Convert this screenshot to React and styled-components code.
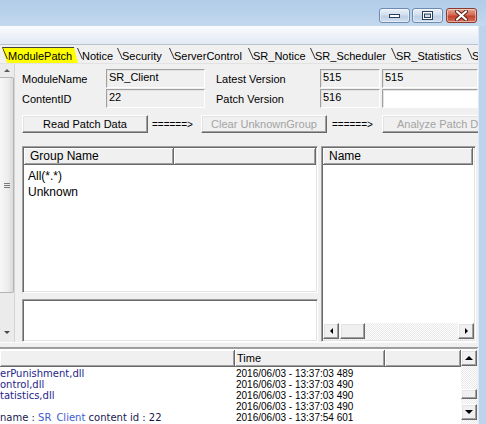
import React from 'react';
import styled, { createGlobalStyle } from 'styled-components';

const GlobalStyle = createGlobalStyle`
  html, body { margin: 0; padding: 0; background: #f0f0f0; }
  body { font-family: "Liberation Sans", Arial, sans-serif; }
`;

const Window = styled.div`
  width: 486px;
  height: 424px;
  overflow: hidden;
  display: flex;
  flex-direction: column;
  background: #f0f0f0;
`;

const TitleBar = styled.div`
  height: 26px;
  flex: none;
  box-sizing: border-box;
  padding: 8px 9px 0 0;
  display: flex;
  justify-content: flex-end;
  align-items: flex-start;
  gap: 2px;
  background: linear-gradient(180deg, #b2cce8 0%, #bad2eb 55%, #c4d9ee 100%);
`;

const CaptionButton = styled.div`
  width: ${p => p.w}px;
  height: 15px;
  margin-left: ${p => p.ml || 0}px;
  box-sizing: border-box;
  border: 1px solid ${p => (p.close ? '#8a3b30' : '#6d8bb0')};
  border-radius: 3px;
  display: flex;
  align-items: center;
  justify-content: center;
  background: ${p =>
    p.close
      ? 'linear-gradient(180deg, #e7a797 0%, #d46a55 45%, #c2432e 55%, #d66e58 100%)'
      : 'linear-gradient(180deg, #e9f0f8 0%, #d3dfee 45%, #bfd0e5 55%, #d1def0 100%)'};
  box-shadow: inset 0 0 0 1px rgba(255, 255, 255, 0.45);
`;

const Body = styled.div`
  flex: 1;
  display: flex;
  min-height: 0;
`;

const Main = styled.div`
  width: 478px;
  flex: none;
  display: flex;
  flex-direction: column;
  overflow: hidden;
`;

const Frame = styled.div`
  flex: 1;
  background: linear-gradient(90deg, #dfe9f5 0 1px, #bcd3eb 1px);
`;

const Strip = styled.div`
  height: 18px;
  flex: none;
  background: linear-gradient(180deg, #fbfcfe 0%, #eef2f8 50%, #e2e9f3 100%);
  border-bottom: 1px solid #b9c3cf;
`;

const TabRow = styled.div`
  height: 19px;
  flex: none;
  box-sizing: border-box;
  padding-top: 2px;
  display: flex;
  border-bottom: 1px solid #e2e2e2;
  overflow: hidden;
`;

const Tab = styled.div`
  position: relative;
  flex: none;
  width: ${p => p.w}px;
  height: 16px;
  box-sizing: border-box;
  padding-left: ${p => p.pl || 4}px;
  font-size: 11px;
  line-height: 17px;
  color: #000;
  white-space: nowrap;
  background: ${p => (p.active ? '#ffff00' : 'transparent')};
  border-top: ${p => (p.active ? '1px solid #404040' : '1px solid transparent')};
  clip-path: ${p =>
    p.active ? 'polygon(2px 0, calc(100% - 4px) 0, 100% 100%, 7px 100%)' : 'none'};
  &::before {
    content: '';
    position: absolute;
    left: ${p => (p.active ? 2 : -1)}px;
    top: 0;
    width: 1px;
    height: 11px;
    background: #303030;
    transform: skewX(24deg);
    transform-origin: top left;
  }
`;

const Page = styled.div`
  height: 278px;
  flex: none;
  display: flex;
`;

const VScroll = styled.div`
  width: 14px;
  flex: none;
  display: flex;
  flex-direction: column;
  align-items: stretch;
  background: #ebebeb;
  border-right: 1px solid #d4d4d4;
`;

const ArrowCell = styled.div`
  height: ${p => p.h}px;
  flex: none;
  display: flex;
  align-items: center;
  justify-content: center;
`;

const Thumb = styled.div`
  height: 216px;
  flex: none;
  box-sizing: border-box;
  border: 1px solid #b4b4b4;
  border-left: none;
  border-radius: 0 2px 2px 0;
  background: linear-gradient(90deg, #f7f7f7 0%, #ededed 60%, #dadada 100%);
  display: flex;
  align-items: center;
  justify-content: center;
`;

const Track = styled.div`
  flex: 1;
`;

const Content = styled.div`
  flex: 1;
  min-width: 0;
  box-sizing: border-box;
  padding: 5px 0 0 7px;
  display: flex;
  flex-direction: column;
  overflow: hidden;
`;

const FormGrid = styled.div`
  display: grid;
  grid-template-columns: 84px 99px 115px 60px 98px;
  grid-auto-rows: 19px;
  row-gap: 1px;
  flex: none;
`;

const Label = styled.div`
  font-size: 11px;
  color: #000;
  align-self: center;
  padding-left: ${p => p.pl || 0}px;
  white-space: nowrap;
`;

const Field = styled.div`
  box-sizing: border-box;
  margin-left: ${p => p.ml || 0}px;
  padding: 1px 0 0 2px;
  font-size: 11px;
  line-height: 13px;
  color: #000;
  background: ${p => (p.white ? '#fff' : '#f0f0f0')};
  border: 1px solid;
  border-color: #a0a0a0 #fff #fff #a0a0a0;
  box-shadow: inset 1px 1px 0 #e3e3e3;
  white-space: nowrap;
  overflow: hidden;
`;

const ButtonRow = styled.div`
  margin-top: 7px;
  height: 18px;
  flex: none;
  display: flex;
  align-items: stretch;
`;

const Button = styled.div`
  width: 126px;
  flex: none;
  box-sizing: border-box;
  padding-left: ${p => p.pl || 0}px;
  display: flex;
  align-items: center;
  justify-content: ${p => (p.pl ? 'flex-start' : 'center')};
  font-size: 11px;
  color: ${p => (p.disabled ? '#a3a3a3' : '#000')};
  background: #f0f0f0;
  border: 1px solid;
  border-color: #fff #696969 #696969 #fff;
  box-shadow: inset -1px -1px 0 #a0a0a0, inset 1px 1px 0 #e3e3e3;
  white-space: nowrap;
  overflow: hidden;
`;

const Arrow = styled.div`
  width: ${p => p.w}px;
  flex: none;
  box-sizing: border-box;
  padding-left: ${p => p.pl}px;
  font-size: 10px;
  display: flex;
  align-items: center;
  color: #000;
`;

const Lists = styled.div`
  margin-top: 13px;
  flex: 1;
  min-height: 0;
  display: flex;
  gap: 3px;
`;

const LeftCol = styled.div`
  width: 296px;
  flex: none;
  display: flex;
  flex-direction: column;
  gap: 6px;
`;

const Sunken = styled.div`
  box-sizing: border-box;
  background: #fff;
  border: 1px solid;
  border-color: #a0a0a0 #fff #fff #a0a0a0;
  box-shadow: inset 1px 1px 0 #696969, inset -1px -1px 0 #e3e3e3;
  padding: 1px;
  display: flex;
  flex-direction: column;
  overflow: hidden;
`;

const ListBox = styled(Sunken)`
  flex: 1;
  min-height: 0;
`;

const Memo = styled(Sunken)`
  height: 43px;
  flex: none;
`;

const RightList = styled(Sunken)`
  width: 155px;
  flex: none;
`;

const Header = styled.div`
  height: 17px;
  flex: none;
  display: flex;
`;

const HeaderCell = styled.div`
  width: ${p => (p.w ? `${p.w}px` : 'auto')};
  flex: ${p => (p.w ? 'none' : '1')};
  box-sizing: border-box;
  padding-left: ${p => p.pl || 6}px;
  font-size: ${p => p.fs || 12}px;
  line-height: 16px;
  color: #000;
  background: #f0f0f0;
  border-right: 1px solid #696969;
  border-bottom: 1px solid #696969;
  box-shadow: inset 1px 1px 0 #fff, inset -1px -1px 0 #a0a0a0;
  white-space: nowrap;
  overflow: hidden;
`;

const Items = styled.div`
  flex: 1;
  padding: 3px 0 0 4px;
`;

const Item = styled.div`
  font-size: 12px;
  line-height: 16px;
  color: #000;
`;

const HScroll = styled.div`
  height: 17px;
  flex: none;
  display: flex;
  background: repeating-conic-gradient(#e8e8e8 0 25%, #ffffff 0 50%) 0 0 / 2px 2px;
`;

const ScrollBox = styled.div`
  width: ${p => p.w || 16}px;
  height: ${p => p.h || 16}px;
  margin-left: ${p => p.ml || 0}px;
  margin-top: ${p => p.mt || 0}px;
  flex: none;
  box-sizing: border-box;
  display: flex;
  align-items: center;
  justify-content: center;
  background: #f0f0f0;
  border: 1px solid;
  border-color: #fff #696969 #696969 #fff;
  box-shadow: inset -1px -1px 0 #a0a0a0, inset 1px 1px 0 #e3e3e3;
`;

const Spacer = styled.div`
  flex: 1;
`;

const Splitter = styled.div`
  height: 6px;
  flex: none;
  box-sizing: border-box;
  border-top: 1px solid #fbfbfb;
  border-bottom: 1px solid #9c9c9c;
  background: #f0f0f0;
`;

const BottomList = styled.div`
  flex: 1;
  min-height: 0;
  display: flex;
  background: #fff;
  border-top: 1px solid #a0a0a0;
  padding-top: 1px;
  margin-right: 1px;
`;

const LogArea = styled.div`
  flex: 1;
  min-width: 0;
  display: flex;
  flex-direction: column;
  overflow: hidden;
`;

const LogRows = styled.div`
  padding-top: 1px;
`;

const LogRow = styled.div`
  display: flex;
  height: 11px;
  line-height: 11px;
  white-space: nowrap;
`;

const LogName = styled.div`
  width: 235px;
  flex: none;
  overflow: hidden;
  font-family: "DejaVu Sans", sans-serif;
  font-size: 10px;
  color: #25258a;
`;

const LogTime = styled.div`
  padding-left: 1px;
  font-size: 10px;
  color: #000;
`;

const Blue = styled.span`
  color: #3b5bd0;
`;

const Dark = styled.span`
  color: #18184f;
`;

const BottomScroll = styled.div`
  width: 16px;
  flex: none;
  display: flex;
  flex-direction: column;
  background: repeating-conic-gradient(#e8e8e8 0 25%, #ffffff 0 50%) 0 0 / 2px 2px;
`;

const Tri = ({ dir, size = 3, color = '#000' }) => {
  const s = size;
  const pts = {
    up: `0,${s} ${s},0 ${2 * s},${s}`,
    down: `0,0 ${2 * s},0 ${s},${s}`,
    left: `${s},0 ${s},${2 * s} 0,${s}`,
    right: `0,0 0,${2 * s} ${s},${s}`,
  }[dir];
  const horiz = dir === 'left' || dir === 'right';
  return (
    <svg width={horiz ? s : 2 * s} height={horiz ? 2 * s : s} viewBox={`0 0 ${horiz ? s : 2 * s} ${horiz ? 2 * s : s}`}>
      <polygon points={pts} fill={color} />
    </svg>
  );
};

const tabs = [
  { label: 'ModulePatch', w: 78, pl: 8, active: true },
  { label: 'Notice', w: 40 },
  { label: 'Security', w: 52 },
  { label: 'ServerControl', w: 79 },
  { label: 'SR_Notice', w: 62 },
  { label: 'SR_Scheduler', w: 81 },
  { label: 'SR_Statistics', w: 76 },
  { label: 'S', w: 20 },
];

const logs = [
  { name: 'erPunishment,dll', time: '2016/06/03 - 13:37:03 489' },
  { name: 'ontrol,dll', time: '2016/06/03 - 13:37:03 490' },
  { name: 'tatistics,dll', time: '2016/06/03 - 13:37:03 490' },
  { name: '', time: '2016/06/03 - 13:37:03 490' },
  {
    name: (
      <>
        <Dark>name : </Dark>
        <Blue>SR_Client</Blue>
        <Dark> content id : 22</Dark>
      </>
    ),
    time: '2016/06/03 - 13:37:54 601',
  },
];

const App = () => {
  return (
    <Window>
      <GlobalStyle />
      <TitleBar>
        <CaptionButton w={31}>
          <svg width="11" height="5" viewBox="0 0 11 5">
            <rect x="0.5" y="1.5" width="10" height="3" fill="#fff" stroke="#2c3e58" />
          </svg>
        </CaptionButton>
        <CaptionButton w={31}>
          <svg width="11" height="9" viewBox="0 0 11 9">
            <rect x="0.5" y="0.5" width="10" height="8" fill="#fff" stroke="#2c3e58" />
            <rect x="2.5" y="3" width="6" height="3.5" fill="#cddbee" stroke="#2c3e58" />
          </svg>
        </CaptionButton>
        <CaptionButton w={31} ml={1} close>
          <svg width="13" height="11" viewBox="0 0 13 11">
            <path d="M2 1.5 L11 9.5 M11 1.5 L2 9.5" stroke="#5a1c14" strokeWidth="4" strokeLinecap="round" />
            <path d="M2 1.5 L11 9.5 M11 1.5 L2 9.5" stroke="#fff" strokeWidth="2.2" strokeLinecap="round" />
          </svg>
        </CaptionButton>
      </TitleBar>
      <Body>
        <Main>
          <Strip />
          <TabRow>
            {tabs.map(t => (
              <Tab key={t.label} w={t.w} pl={t.pl} active={t.active ? 1 : 0}>
                {t.label}
              </Tab>
            ))}
          </TabRow>
          <Page>
            <VScroll>
              <ArrowCell h={13}>
                <Tri dir="up" size={3} color="#5a5a5a" />
              </ArrowCell>
              <Thumb>
                <svg width="6" height="5" viewBox="0 0 6 5">
                  <path d="M0 0.5 H6 M0 2.5 H6 M0 4.5 H6" stroke="#7a7a7a" strokeWidth="1" />
                </svg>
              </Thumb>
              <Track />
              <ArrowCell h={20}>
                <Tri dir="down" size={3} color="#4a4a4a" />
              </ArrowCell>
            </VScroll>
            <Content>
              <FormGrid>
                <Label>ModuleName</Label>
                <Field>SR_Client</Field>
                <Label pl={11}>Latest Version</Label>
                <Field>515</Field>
                <Field ml={2}>515</Field>
                <Label>ContentID</Label>
                <Field>22</Field>
                <Label pl={11}>Patch Version</Label>
                <Field>516</Field>
                <Field ml={2} white={1} />
              </FormGrid>
              <ButtonRow>
                <Button>Read Patch Data</Button>
                <Arrow w={53} pl={4}>======&gt;</Arrow>
                <Button disabled>Clear UnknownGroup</Button>
                <Arrow w={55} pl={5}>======&gt;</Arrow>
                <Button disabled pl={14}>Analyze Patch D</Button>
              </ButtonRow>
              <Lists>
                <LeftCol>
                  <ListBox>
                    <Header>
                      <HeaderCell w={150}>Group Name</HeaderCell>
                      <HeaderCell />
                    </Header>
                    <Items>
                      <Item>All(*.*)</Item>
                      <Item>Unknown</Item>
                    </Items>
                  </ListBox>
                  <Memo />
                </LeftCol>
                <RightList>
                  <Header>
                    <HeaderCell w={150}>Name</HeaderCell>
                  </Header>
                  <Spacer />
                  <HScroll>
                    <ScrollBox>
                      <Tri dir="left" size={3} />
                    </ScrollBox>
                    <ScrollBox w={25} ml={1} />
                    <Spacer />
                    <ScrollBox>
                      <Tri dir="right" size={3} />
                    </ScrollBox>
                  </HScroll>
                </RightList>
              </Lists>
            </Content>
          </Page>
          <Splitter />
          <BottomList>
            <LogArea>
              <Header>
                <HeaderCell w={235} />
                <HeaderCell w={150} pl={2} fs={11}>Time</HeaderCell>
                <HeaderCell />
              </Header>
              <LogRows>
                {logs.map((l, i) => (
                  <LogRow key={i}>
                    <LogName>{l.name}</LogName>
                    <LogTime>{l.time}</LogTime>
                  </LogRow>
                ))}
              </LogRows>
            </LogArea>
            <BottomScroll>
              <ScrollBox>
                <Tri dir="up" size={4} />
              </ScrollBox>
              <ScrollBox h={10} mt={23} />
              <ScrollBox mt={5}>
                <Tri dir="down" size={4} />
              </ScrollBox>
            </BottomScroll>
          </BottomList>
        </Main>
        <Frame />
      </Body>
    </Window>
  );
};

export default App;
